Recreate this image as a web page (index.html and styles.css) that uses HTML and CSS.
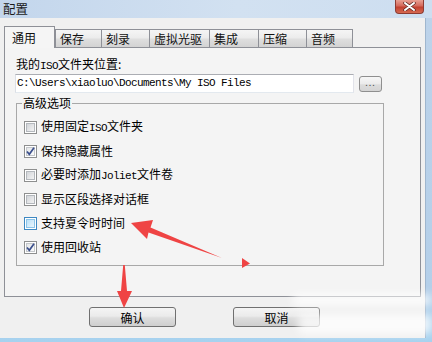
FILE: index.html
```html
<!DOCTYPE html>
<html lang="zh-CN">
<head>
<meta charset="utf-8">
<title>配置</title>
<link rel="stylesheet" href="styles.css">
</head>
<body>
<div class="window">
  <div class="titlebar">
    <span class="title">配置</span>
    <div class="close">
      <svg width="13" height="9" viewBox="0 0 13 9"><path d="M2 1 L11 8 M11 1 L2 8" stroke="#5a2620" stroke-width="3.4" stroke-linecap="round"/><path d="M2 1 L11 8 M11 1 L2 8" stroke="#ffffff" stroke-width="2" stroke-linecap="round"/></svg>
    </div>
  </div>
  <div class="client">
    <div class="tabs">
      <div class="tab active">通用</div>
      <div class="tab">保存</div>
      <div class="tab">刻录</div>
      <div class="tab">虚拟光驱</div>
      <div class="tab">集成</div>
      <div class="tab">压缩</div>
      <div class="tab">音频</div>
    </div>
    <div class="panel">
      <div class="field-label">我的<span class="lat">ISO</span>文件夹位置:</div>
      <div class="path-row">
        <div class="input">C:\Users\xiaoluo\Documents\My ISO Files</div>
        <div class="browse">...</div>
      </div>
      <fieldset class="group">
        <legend>高级选项</legend>
        <div class="check"><span class="box"></span><span class="label">使用固定<span class="lat">ISO</span>文件夹</span></div>
        <div class="check"><span class="box checked"><svg width="11" height="11" viewBox="0 0 11 11"><path d="M2 5.5 L4.3 8.3 L9 1.8" fill="none" stroke="#3b4f8c" stroke-width="1.7"/></svg></span><span class="label">保持隐藏属性</span></div>
        <div class="check"><span class="box"></span><span class="label">必要时添加<span class="lat">Joliet</span>文件卷</span></div>
        <div class="check"><span class="box"></span><span class="label">显示区段选择对话框</span></div>
        <div class="check"><span class="box hover"></span><span class="label">支持夏令时时间</span></div>
        <div class="check"><span class="box checked"><svg width="11" height="11" viewBox="0 0 11 11"><path d="M2 5.5 L4.3 8.3 L9 1.8" fill="none" stroke="#3b4f8c" stroke-width="1.7"/></svg></span><span class="label">使用回收站</span></div>
      </fieldset>
    </div>
    <div class="buttons">
      <button class="btn">确认</button>
      <button class="btn">取消</button>
    </div>
  </div>
  <svg class="annot" width="432" height="342" viewBox="0 0 432 342">
    <polygon points="131,223 153,220 150.5,227.5 222,258 148.5,232.5 147,239" fill="#ef4444"/>
    <polygon points="242,258 250,263.5 242,268" fill="#ef4444"/>
    <polygon points="123.2,265 124.8,265 127,291 132,291 124,308 117,291 121,291" fill="#ef4444"/>
  </svg>
  <div class="smudge s1"></div>
  <div class="smudge s2"></div>
</div>
</body>
</html>
```

FILE: styles.css
```css
body {
  margin: 0;
  font-family: "Noto Sans CJK SC", "Noto Sans", sans-serif;
  font-size: 12px;
  color: #000;
}

.window {
  position: relative;
  width: 432px;
  height: 342px;
  overflow: hidden;
  background: linear-gradient(to bottom, #bdd3ea, #b4cfe9 85%, #a6d2ef);
  display: flex;
  flex-direction: column;
}

.titlebar {
  flex: none;
  height: 18px;
  display: flex;
  justify-content: space-between;
  align-items: flex-start;
  background: linear-gradient(to right, #c3d6ec, #d2e1f1 55%, #cddef0);
}

.title {
  padding: 1px 0 0 3px;
  line-height: 16px;
  font-size: 12.5px;
  color: #1a1a1a;
}

.close {
  box-sizing: border-box;
  width: 29px;
  height: 14px;
  margin-right: 8px;
  border: 1px solid #8d3b32;
  border-top: none;
  border-radius: 0 0 4px 4px;
  background: linear-gradient(#e8a093, #d4695b 45%, #c2402f 55%, #d56a52);
  display: flex;
  align-items: center;
  justify-content: center;
}

.client {
  flex: 1;
  margin: 0 6px 4px 0;
  padding: 0 4px 0 4px;
  background: #f0f0f0;
  border-right: 1px solid #9fb6ce;
  display: flex;
  flex-direction: column;
}

.tabs {
  display: flex;
  align-items: flex-end;
  height: 22px;
  margin-top: 8px;
  margin-bottom: -1px;
  position: relative;
  z-index: 1;
}

.tab {
  box-sizing: border-box;
  height: 18px;
  margin-bottom: 1px;
  padding-left: 4px;
  border: 1px solid #8e9097;
  border-bottom: none;
  border-right: none;
  background: linear-gradient(#f5f5f5, #ececec 45%, #dedede 55%, #d3d3d3);
  line-height: 18px;
  white-space: nowrap;
  color: #111;
}

.tab:nth-child(2) { width: 46px; }
.tab:nth-child(3) { width: 48px; }
.tab:nth-child(4) { width: 60px; }
.tab:nth-child(5) { width: 49px; }
.tab:nth-child(6) { width: 48px; }
.tab:nth-child(7) { width: 47px; border-right: 1px solid #8e9097; }

.tab.active {
  width: 51px;
  height: 22px;
  margin-bottom: 0;
  padding-left: 7px;
  border-right: 1px solid #8e9097;
  background: #f5f5f5;
  line-height: 21px;
}

.panel {
  flex: none;
  box-sizing: border-box;
  height: 250px;
  border: 1px solid #8e9097;
  background: #f4f4f4;
  padding: 9px 11px 0 11px;
}

.lat {
  font-family: "Liberation Mono", monospace;
  font-size: 11px;
  letter-spacing: -0.6px;
}

.field-label {
  height: 14px;
  line-height: 14px;
}

.path-row {
  display: flex;
  align-items: center;
  margin-top: 3px;
}

.input {
  box-sizing: border-box;
  width: 339px;
  height: 19px;
  margin-left: -1px;
  padding-left: 1px;
  border: 1px solid;
  border-color: #abadb3 #e2e3ea #e3e9ef #dbdfe6;
  background: #fff;
  font-family: "Liberation Mono", monospace;
  font-size: 11px;
  letter-spacing: -0.6px;
  line-height: 17px;
  white-space: pre;
}

.browse {
  box-sizing: border-box;
  width: 23px;
  height: 16px;
  margin-left: 5px;
  border: 1px solid #8f8f8f;
  border-radius: 3px;
  background: linear-gradient(#f7f7f7, #ebebeb 50%, #dcdcdc 55%, #d4d4d4);
  font-size: 9px;
  line-height: 12px;
  color: #555;
  text-align: center;
  letter-spacing: 1px;
}

.group {
  box-sizing: border-box;
  width: 368px;
  margin: 3px 0 0 0;
  padding: 5px 0 6px 7px;
  border: 1px solid #a8a8a8;
}

.group legend {
  padding: 0 1px;
  margin-left: -2px;
  line-height: 14px;
}

.check {
  display: flex;
  align-items: center;
  height: 24px;
}

.box {
  box-sizing: border-box;
  position: relative;
  width: 13px;
  height: 13px;
  border: 1px solid #8e8f8f;
  background: #fff;
  padding: 1px;
  display: flex;
}

.box::before {
  content: "";
  flex: 1;
  border: 1px solid #b4b8bd;
  background: linear-gradient(135deg, #d2d5d9, #f3f3f3);
}

.box.checked::before {
  border-color: #c4c7cb;
  background: linear-gradient(135deg, #e4e6e8, #fbfbfb);
}

.box svg {
  position: absolute;
  left: 0;
  top: 0;
}

.box.hover {
  border-color: #3e88c2;
}

.box.hover::before {
  border-color: #8cc5ea;
  background: linear-gradient(135deg, #b9e0f8, #eaf6fd);
}

.label {
  margin-left: 4px;
  line-height: 14px;
  white-space: nowrap;
}

.buttons {
  display: flex;
  gap: 57px;
  padding-left: 85px;
  margin-top: 10px;
}

.btn {
  box-sizing: border-box;
  width: 87px;
  height: 20px;
  padding: 0;
  border: 1px solid #707070;
  border-radius: 3px;
  background: linear-gradient(#f4f4f4, #ebebeb 45%, #dddddd 55%, #cfcfcf);
  font-family: "Noto Sans CJK SC", sans-serif;
  font-size: 12px;
  line-height: 17px;
  color: #000;
}

.annot {
  position: absolute;
  left: 0;
  top: 0;
  pointer-events: none;
}

.smudge {
  position: absolute;
  background: rgba(255, 255, 255, 0.75);
  filter: blur(4px);
  border-radius: 6px;
}

.s1 {
  left: 292px;
  top: 294px;
  width: 140px;
  height: 12px;
}

.s2 {
  left: 298px;
  top: 314px;
  width: 134px;
  height: 20px;
}
```
